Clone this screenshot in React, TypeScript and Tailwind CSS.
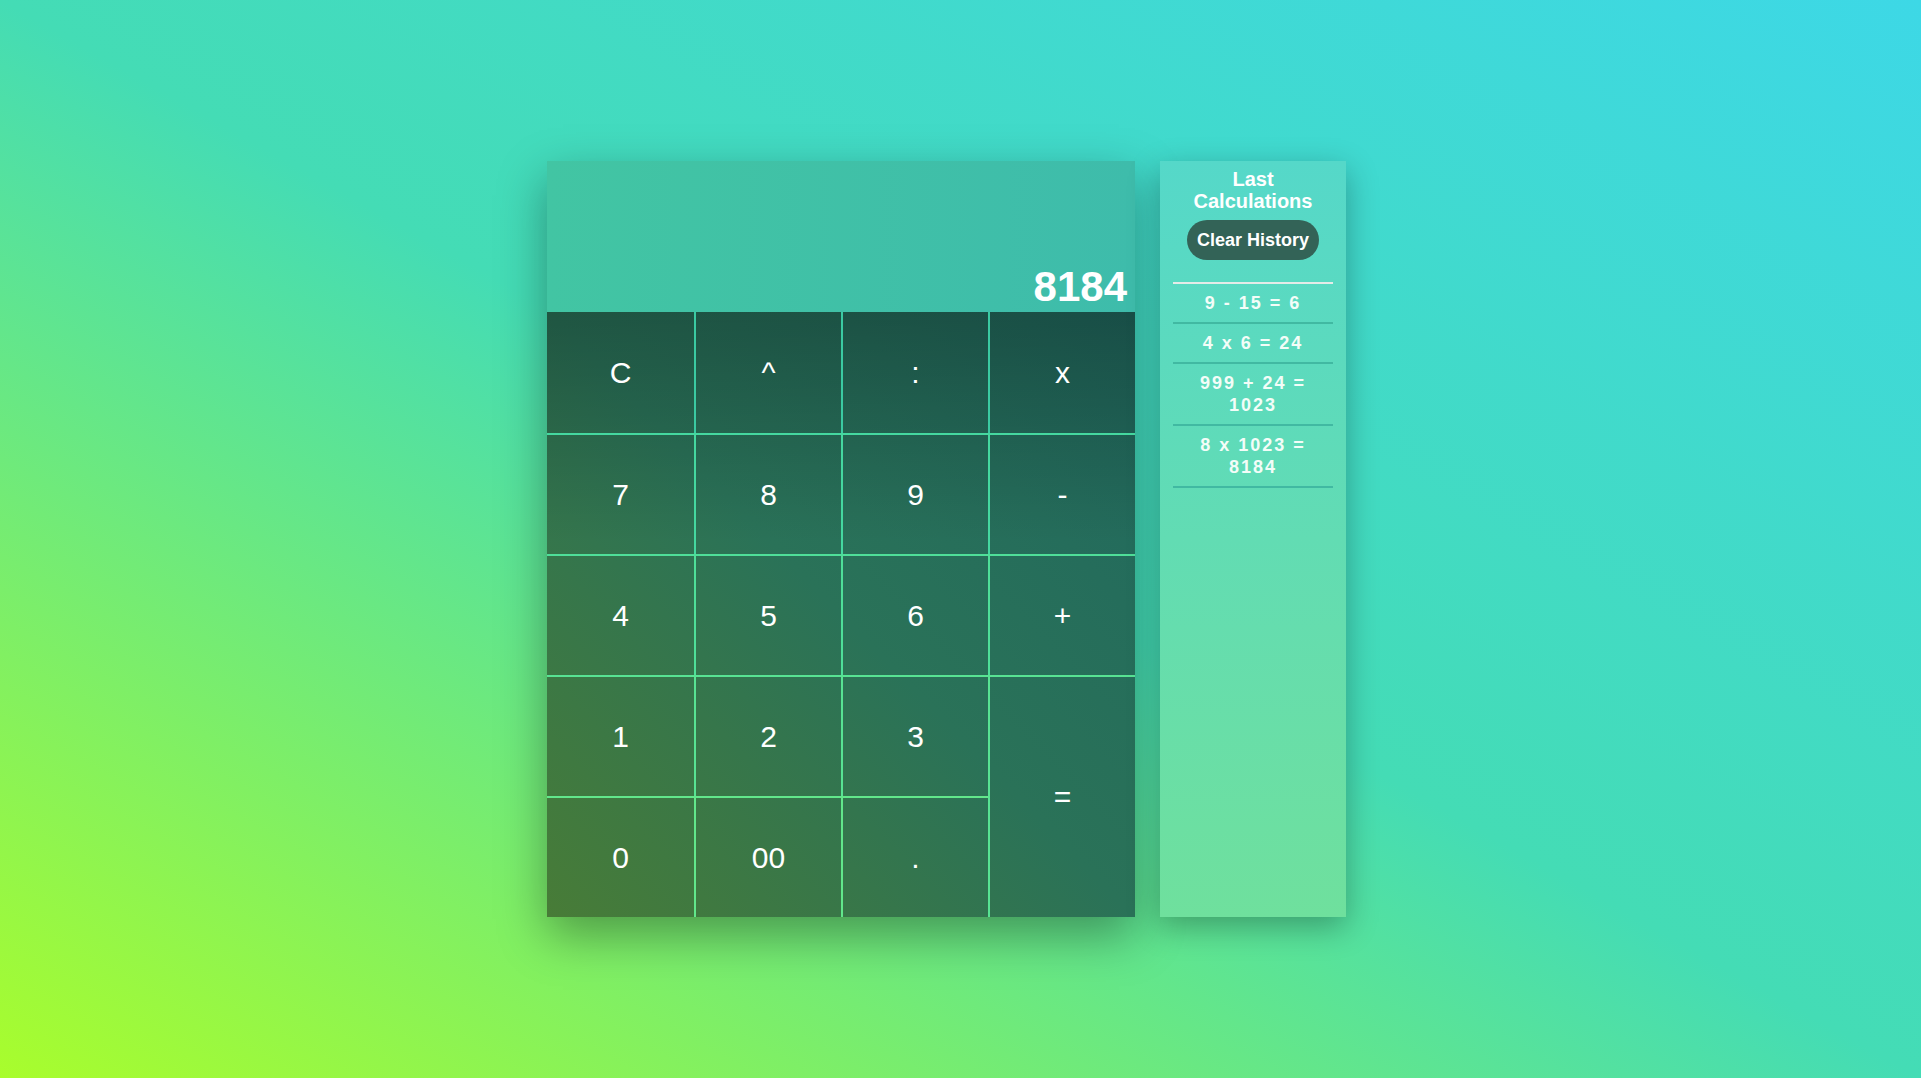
import React from 'react';

type Key = { label: string; cls: string };

// border colours get lighter/greener toward the bottom of the keypad
const keys: Key[] = [
    { label: 'C', cls: '' },
    { label: '^', cls: 'border-l-2 border-[#3bcaa2]' },
    { label: ':', cls: 'border-l-2 border-[#3bcaa2]' },
    { label: 'x', cls: 'border-l-2 border-[#3bcaa2]' },
    { label: '7', cls: 'border-t-2 border-[#45d8a0]' },
    { label: '8', cls: 'border-t-2 border-l-2 border-[#45d8a0]' },
    { label: '9', cls: 'border-t-2 border-l-2 border-[#45d8a0]' },
    { label: '-', cls: 'border-t-2 border-l-2 border-[#45d8a0]' },
    { label: '4', cls: 'border-t-2 border-[#4fdf99]' },
    { label: '5', cls: 'border-t-2 border-l-2 border-[#4fdf99]' },
    { label: '6', cls: 'border-t-2 border-l-2 border-[#4fdf99]' },
    { label: '+', cls: 'border-t-2 border-l-2 border-[#4fdf99]' },
    { label: '1', cls: 'border-t-2 border-[#58e393]' },
    { label: '2', cls: 'border-t-2 border-l-2 border-[#58e393]' },
    { label: '3', cls: 'border-t-2 border-l-2 border-[#58e393]' },
    { label: '=', cls: 'row-span-2 border-t-2 border-l-2 border-[#58e393]' },
    { label: '0', cls: 'border-t-2 border-[#62e78b]' },
    { label: '00', cls: 'border-t-2 border-l-2 border-[#62e78b]' },
    { label: '.', cls: 'border-t-2 border-l-2 border-[#62e78b]' },
];

const history = ['9 - 15 = 6', '4 x 6 = 24', '999 + 24 = 1023', '8 x 1023 = 8184'];

const Calculator: React.FC = () => (
    <div className="w-[588px] h-[756px] flex flex-col shadow-[0_18px_45px_rgba(0,0,0,0.35)]">
        <div className="h-[151px] flex items-end justify-end px-[8px] pb-[4px] bg-[linear-gradient(to_right,#42c5a3,#3ebcab)] text-white text-[42px] font-bold leading-none">
            8184
        </div>
        <div className="flex-1 grid grid-cols-4 grid-rows-5 bg-[linear-gradient(to_bottom,rgba(0,0,0,0.25)_0%,rgba(0,0,0,0)_38%),linear-gradient(to_top_right,#487c37_0%,#2a7258_50%,#20685e_100%)]">
            {keys.map(k => (
                <button key={k.label} className={`flex items-center justify-center text-white text-[30px] leading-none ${k.cls}`}>
                    {k.label}
                </button>
            ))}
        </div>
    </div>
);

const History: React.FC = () => (
    <div className="w-[186px] flex flex-col items-center pt-[7px] px-[13px] bg-[linear-gradient(to_bottom,#55d8c9,#6fe09d)] shadow-[0_10px_30px_rgba(0,0,0,0.3)]">
        <h2 className="text-[20px] leading-[22px] font-bold text-white text-center">Last Calculations</h2>
        <button className="mt-[8px] h-[40px] px-[10px] rounded-full bg-[#336357] text-white text-[18px] font-bold">
            Clear History
        </button>
        <div className="mt-[22px] w-full border-t-2 border-[#e4ebe8]">
            {history.map(h => (
                <div key={h} className="py-[8px] px-[10px] border-b-2 border-[#41b9a2] text-center text-[18px] leading-[22px] font-bold tracking-[2px] text-[#f3fdf8]">
                    {h}
                </div>
            ))}
        </div>
    </div>
);

export default function App() {
    return (
        <div className="min-h-screen w-full flex items-center justify-center pr-[28px] bg-[linear-gradient(to_top_right,#a9fd2c_0%,#44dcb5_50%,#3dd8e6_100%)] font-['Liberation_Sans',Arial,sans-serif]">
            <div className="flex gap-[25px] items-stretch">
                <Calculator />
                <History />
            </div>
        </div>
    );
}
